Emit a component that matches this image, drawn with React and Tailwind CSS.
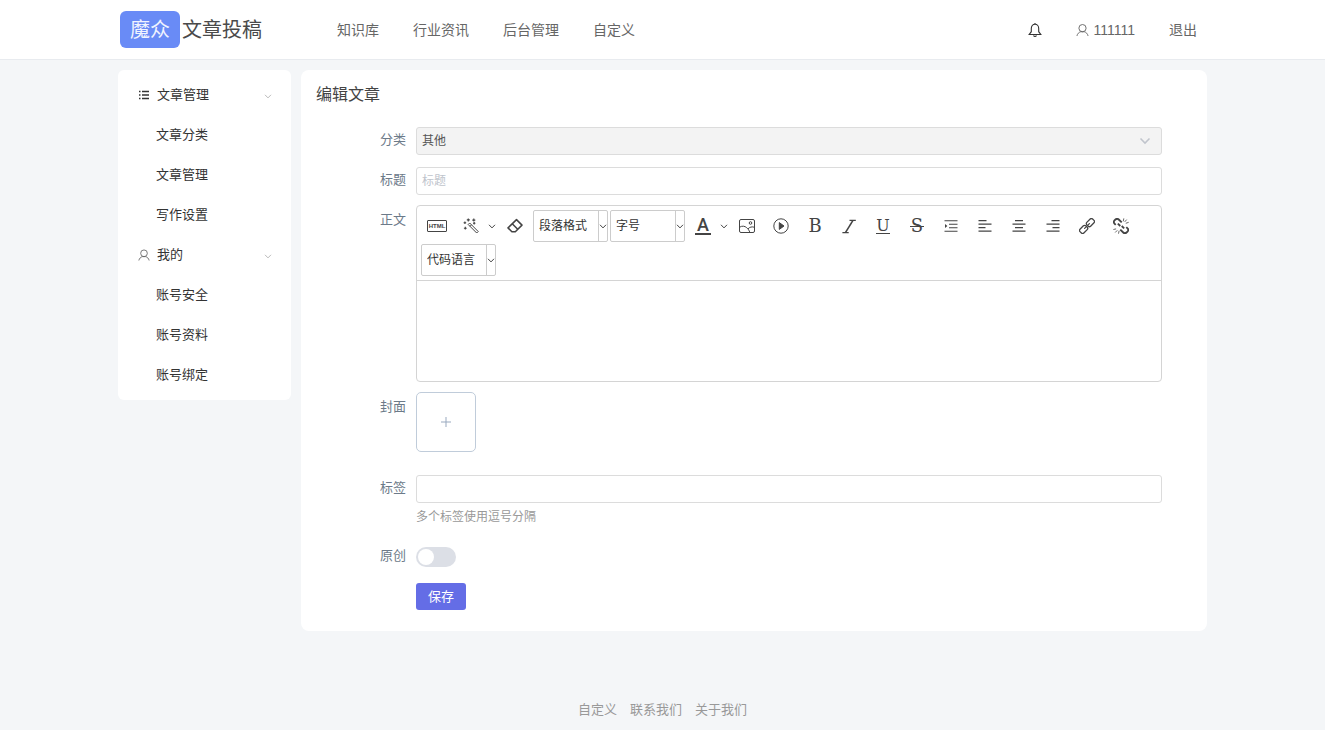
import { useState } from 'react';

const NAV_LINKS = ['知识库', '行业资讯', '后台管理', '自定义'];
const FOOTER_LINKS = ['自定义', '联系我们', '关于我们'];

const MENU = [
  { title: '文章管理', icon: 'list', items: ['文章分类', '文章管理', '写作设置'] },
  { title: '我的', icon: 'user', items: ['账号安全', '账号资料', '账号绑定'] },
];

const INPUT_CLASS =
  'block w-full h-7 px-[5px] border border-[#dcdcdc] rounded-[3px] text-xs text-[#555] placeholder-[#c0c4cc] bg-white outline-none focus:border-[#646de6]';

/* ---------- icons ---------- */

const UserIcon = ({ className }) => (
  <svg viewBox="0 0 14 14" className={className} fill="none" stroke="currentColor" strokeWidth="1">
    <circle cx="7" cy="5" r="3.9" />
    <path d="M1 13.4c.5-2.4 2.2-4 4-4.5h4c1.8.5 3.5 2.1 4 4.5" />
  </svg>
);

const BellIcon = ({ className }) => (
  <svg viewBox="0 0 14 16" className={className} fill="none" stroke="currentColor" strokeWidth="1.1">
    <path d="M7 2.3c-2.4 0-3.700 1.800-3.700 4.200v3.200L1.200 12.500h11.600l-2.100-2.800V6.500c0-2.400-1.300-4.200-3.700-4.200z" />
    <path d="M7 2.300V1M5.600 13.300c.2.900.7 1.200 1.400 1.200s1.200-.3 1.400-1.200" />
  </svg>
);

const ListIcon = ({ className }) => (
  <svg viewBox="0 0 10 10" className={className} fill="none" stroke="currentColor" strokeWidth="1.3">
    <path d="M0 1.500h1.500M3 1.500h7M0 5h1.500M3 5h7M0 8.500h1.500M3 8.500h7" />
  </svg>
);

const Chevron = ({ className }) => (
  <svg viewBox="0 0 8 5" className={className} fill="none" stroke="currentColor" strokeWidth="1">
    <path d="M1 .8 4 3.900 7 .8" />
  </svg>
);

const WandIcon = () => (
  <svg viewBox="0 0 16 16" className="w-4 h-4" fill="none" stroke="currentColor" strokeWidth="1">
    <path d="m5.200 6.500 1.500-1.500 8.500 8.500-1.500 1.500zM7 8.300l1.500-1.500" />
    <path
      d="M5.300.4v3M3.800 1.900h3M10.800.6v3M9.300 2.100h3M1.900 3.400v2.600M.6 4.700h2.600M2.300 8.800v2.800M.9 10.200h2.800M10 5.300h2.400M11.200 4.100v2.400"
      strokeWidth="1.1"
    />
  </svg>
);

const EraserIcon = () => (
  <svg viewBox="0 0 16 16" className="w-4 h-4" fill="none" stroke="currentColor" strokeWidth="1.5">
    <path d="M9.500 1.600 15 7.100 8.300 13.800H4.900L1 9.900z" strokeLinejoin="round" />
    <path d="m5.200 5.800 5.500 5.500" />
  </svg>
);

const PictureIcon = () => (
  <svg viewBox="0 0 16 16" className="w-4 h-4" fill="none" stroke="currentColor" strokeWidth="1">
    <rect x=".5" y="1.5" width="15" height="13" rx="1.5" />
    <circle cx="11.5" cy="5" r="1.3" />
    <path d="M.5 9.300c2.500-1.800 5.400-1.300 7.200.4 1.500 1.300 2.600 2.900 3.100 4.600M9 10.900c1.500-1.900 4.200-2.500 6.500-1.600" />
  </svg>
);

const PlayIcon = () => (
  <svg viewBox="0 0 16 16" className="w-4 h-4" fill="none" stroke="currentColor" strokeWidth="1">
    <circle cx="8" cy="8" r="7.2" />
    <path d="M6.300 4.600v6.800L11 8z" fill="currentColor" />
  </svg>
);

const ItalicIcon = () => (
  <svg viewBox="0 0 16 16" className="w-4 h-4" fill="none" stroke="currentColor" strokeWidth="1.2">
    <path d="M8.500 2.400h6.300M1.400 14.600h6.300" />
    <path d="M12 2.400 4.400 14.600" strokeWidth="1.6" />
  </svg>
);

const IndentIcon = () => (
  <svg viewBox="0 0 14 14" className="w-3.5 h-3.5" fill="none" stroke="currentColor" strokeWidth="1.1">
    <path d="M.5 1.700h13M5 5.200h8.500M5 8.700h8.500M.5 12.200h13" />
    <path d="M1 4.900v4.200L3.400 7z" fill="currentColor" stroke="none" />
  </svg>
);

const ALIGN_PATHS = {
  left: 'M.5 1.7h8M.5 5.2h13M.5 8.7h7M.5 12.2h13',
  center: 'M3 1.7h8M.5 5.2h13M3 8.7h8M.5 12.2h13',
  right: 'M5.5 1.7h8M.5 5.2h13M6.5 8.7h7M.5 12.2h13',
};

const AlignIcon = ({ align }) => (
  <svg viewBox="0 0 14 14" className="w-3.5 h-3.5" fill="none" stroke="currentColor" strokeWidth="1.2">
    <path d={ALIGN_PATHS[align]} />
  </svg>
);

const LinkIcon = () => (
  <svg viewBox="0 0 16 16" className="w-4 h-4" fill="none" stroke="currentColor" strokeWidth="1.3" strokeLinecap="round">
    <g transform="rotate(-45 8 8)">
      <path d="M7.300 7.200V7a1.700 1.700 0 0 0-1.700-1.700H.8A1.700 1.700 0 0 0-.9 7v2A1.700 1.700 0 0 0 .8 10.700h4.800A1.700 1.700 0 0 0 7.300 9" />
      <path d="M8.700 8.800V9a1.700 1.700 0 0 0 1.700 1.700h4.800A1.700 1.700 0 0 0 16.900 9V7a1.700 1.700 0 0 0-1.700-1.700h-4.800A1.700 1.700 0 0 0 8.700 7" />
      <path d="M4.600 8h6.800" />
    </g>
  </svg>
);

const UnlinkIcon = () => (
  <svg viewBox="0 0 16 16" className="w-4 h-4" fill="none" stroke="currentColor">
    <g transform="rotate(45 8 8)" strokeWidth="1.8">
      <path d="M6 5H1.800A2.300 2.300 0 0 0-.5 7.300v1.400A2.300 2.300 0 0 0 1.800 11h1.700M4 8.500h3.500" />
      <path d="M10 11h4.200a2.300 2.300 0 0 0 2.300-2.300V7.300A2.300 2.300 0 0 0 14.200 5h-1.700M12 7.500H8.500" />
    </g>
    <path
      d="M10.800.4 10.300 3.300M13.700 1.600 11.700 3.900M15.700 4.300l-2.900 1M.4 11.500l2.700-.6M2.200 14.500l2.100-2.200M5.500 15.700l.6-2.900"
      strokeWidth=".8"
    />
  </svg>
);

/* ---------- header ---------- */

const Header = () => (
  <header className="bg-white border-b border-[#e8ebef]">
    <div className="max-w-[1089px] mx-auto h-[59px] flex items-center px-0.5">
      <a href="#" className="flex items-center gap-0.5 text-xl text-[#4a4a4a]">
        <span className="h-[37px] px-2.5 flex items-center rounded-md bg-[#698bf6] text-[#f0f3ff]">
          魔众
        </span>
        <span>文章投稿</span>
      </a>
      <nav className="flex gap-[34px] ml-[75px] text-sm text-[#666]">
        {NAV_LINKS.map((link) => (
          <a key={link} href="#" className="hover:text-[#646de6]">
            {link}
          </a>
        ))}
      </nav>
      <div className="ml-auto mr-2 flex items-center gap-[34px] text-sm text-[#666]">
        <a href="#" aria-label="消息" className="text-[#333]">
          <BellIcon className="w-3.5 h-4" />
        </a>
        <a href="#" className="flex items-center gap-1">
          <UserIcon className="w-[13px] h-3.5" />
          111111
        </a>
        <a href="#">退出</a>
      </div>
    </div>
  </header>
);

/* ---------- sidebar ---------- */

const Sidebar = () => (
  <aside className="w-[173px] shrink-0 bg-white rounded-md py-[5px] text-[13px] text-[#333]">
    {MENU.map((group) => (
      <div key={group.title}>
        <button type="button" className="w-full h-10 pl-5 pr-[19px] flex items-center text-left">
          <span className="w-[19px] shrink-0">
            {group.icon === 'list' ? (
              <ListIcon className="w-2.5 h-2.5 ml-px" />
            ) : (
              <UserIcon className="w-3 h-3.5 text-[#666]" />
            )}
          </span>
          <span className="flex-1">{group.title}</span>
          <Chevron className="w-2 h-[5px] mt-0.5 text-[#bbb]" />
        </button>
        {group.items.map((item) => (
          <a key={item} href="#" className="flex h-10 items-center pl-[38px] hover:text-[#646de6]">
            {item}
          </a>
        ))}
      </div>
    ))}
  </aside>
);

/* ---------- editor ---------- */

const ToolButton = ({ label, children }) => (
  <button
    type="button"
    aria-label={label}
    className="w-8 h-8 flex items-center justify-center rounded-sm hover:bg-gray-100"
  >
    {children}
  </button>
);

const SplitButton = ({ label, children }) => (
  <div className="flex">
    <ToolButton label={label}>{children}</ToolButton>
    <button type="button" aria-label={`${label}选项`} className="w-2.5 h-8 flex items-center justify-center">
      <Chevron className="w-2 h-[5px] shrink-0" />
    </button>
  </div>
);

const ToolSelect = ({ label }) => (
  <div className="relative w-[75px] h-8">
    <select
      aria-label={label}
      className="w-full h-full appearance-none border border-[#ccc] rounded-xs bg-white pl-[5px] pr-2.5 text-xs text-[#333] outline-none"
    >
      <option>{label}</option>
    </select>
    <span className="absolute right-px inset-y-px w-[9px] flex items-center border-l border-[#ccc] pointer-events-none">
      <Chevron className="w-2 h-[5px] shrink-0" />
    </span>
  </div>
);

const Editor = () => (
  <div className="border border-[#d4d4d4] rounded-sm text-[#444]">
    <div className="flex flex-wrap items-center gap-0.5 p-1 border-b border-[#d4d4d4]">
      <ToolButton label="源代码">
        <span className="w-5 h-3 border border-current rounded-[1px] flex items-center justify-center text-[6px] leading-none font-bold">
          HTML
        </span>
      </ToolButton>
      <SplitButton label="自动排版">
        <WandIcon />
      </SplitButton>
      <ToolButton label="清除格式">
        <EraserIcon />
      </ToolButton>
      <ToolSelect label="段落格式" />
      <ToolSelect label="字号" />
      <SplitButton label="字体颜色">
        <span className="w-4 border-b-2 border-current font-[Roboto,sans-serif] text-lg leading-4 font-medium text-center">
          A
        </span>
      </SplitButton>
      <ToolButton label="图片">
        <PictureIcon />
      </ToolButton>
      <ToolButton label="视频">
        <PlayIcon />
      </ToolButton>
      <ToolButton label="加粗">
        <span className="font-['DejaVu_Serif',serif] text-lg leading-5">B</span>
      </ToolButton>
      <ToolButton label="斜体">
        <ItalicIcon />
      </ToolButton>
      <ToolButton label="下划线">
        <span className="w-3.5 border-b border-current font-['DejaVu_Serif',serif] text-base leading-3.5 text-center">
          U
        </span>
      </ToolButton>
      <ToolButton label="删除线">
        <span className="relative w-3.5 font-['DejaVu_Serif',serif] text-lg leading-5 text-center">
          S
          <span className="absolute inset-x-0 top-1/2 h-px bg-current" />
        </span>
      </ToolButton>
      <ToolButton label="首行缩进">
        <IndentIcon />
      </ToolButton>
      <ToolButton label="居左对齐">
        <AlignIcon align="left" />
      </ToolButton>
      <ToolButton label="居中对齐">
        <AlignIcon align="center" />
      </ToolButton>
      <ToolButton label="居右对齐">
        <AlignIcon align="right" />
      </ToolButton>
      <ToolButton label="超链接">
        <LinkIcon />
      </ToolButton>
      <ToolButton label="取消链接">
        <UnlinkIcon />
      </ToolButton>
      <ToolSelect label="代码语言" />
    </div>
    <textarea id="content" className="block w-full h-25 p-2 text-sm resize-none outline-none" />
  </div>
);

/* ---------- form ---------- */

const Field = ({ label, htmlFor, tall = false, children }) => (
  <div className="flex">
    <label
      htmlFor={htmlFor}
      className={`w-25 shrink-0 pr-2.5 text-right text-[13px] text-[#6c7a89] ${
        tall ? 'leading-[30px]' : 'leading-[26px]'
      }`}
    >
      {label}
    </label>
    <div className="flex-1 min-w-0">{children}</div>
  </div>
);

const ArticleForm = () => {
  const [title, setTitle] = useState('');
  const [tags, setTags] = useState('');
  const [original, setOriginal] = useState(false);

  return (
    <form className="pr-[30px]" onSubmit={(e) => e.preventDefault()}>
      <div className="flex flex-col gap-3">
        <Field label="分类" htmlFor="category">
          <div className="relative">
            <select
              id="category"
              className="block w-full h-7 px-[5px] appearance-none border border-[#dcdcdc] rounded-[3px] bg-[#f3f3f3] text-xs text-[#555] outline-none"
            >
              <option>其他</option>
            </select>
            <Chevron className="absolute right-[11px] top-2.5 w-3 h-2 text-[#c0c4cc] pointer-events-none" />
          </div>
        </Field>
        <Field label="标题" htmlFor="title">
          <input
            id="title"
            type="text"
            placeholder="标题"
            value={title}
            onChange={(e) => setTitle(e.target.value)}
            className={INPUT_CLASS}
          />
        </Field>
      </div>

      <div className="flex flex-col gap-2.5 mt-2.5">
        <Field label="正文" htmlFor="content" tall>
          <Editor />
        </Field>
        <Field label="封面" htmlFor="cover" tall>
          <button
            id="cover"
            type="button"
            className="w-15 h-15 flex items-center justify-center border border-[#c0ccda] rounded-[5px] text-[#99a9bf]"
          >
            <svg viewBox="0 0 10 10" className="w-2.5 h-2.5" stroke="currentColor">
              <path d="M5 0v10M0 5h10" />
            </svg>
          </button>
        </Field>
      </div>

      <div className="mt-[23px]">
        <Field label="标签" htmlFor="tags">
          <input
            id="tags"
            type="text"
            value={tags}
            onChange={(e) => setTags(e.target.value)}
            className={INPUT_CLASS}
          />
          <p className="mt-1 text-xs leading-5 text-[#999]">多个标签使用逗号分隔</p>
        </Field>
      </div>

      <div className="mt-4">
        <Field label="原创" htmlFor="original">
          <input
            id="original"
            type="checkbox"
            role="switch"
            checked={original}
            onChange={(e) => setOriginal(e.target.checked)}
            className="block mt-1 w-10 h-5 appearance-none rounded-full bg-[#dcdfe6] cursor-pointer before:block before:w-4 before:h-4 before:m-0.5 before:rounded-full before:bg-white checked:bg-[#646de6] checked:before:ml-5.5"
          />
        </Field>
      </div>

      <button
        type="submit"
        className="block ml-25 mt-3.5 h-[27px] px-3 rounded-[3px] bg-[#646de6] text-[13px] leading-[26px] text-white"
      >
        保存
      </button>
    </form>
  );
};

export default function App() {
  return (
    <div className="min-h-screen flex flex-col bg-[#f4f6f8] font-['Liberation_Sans','Noto_Sans_CJK_SC',sans-serif]">
      <Header />
      <div className="w-full max-w-[1089px] mx-auto mt-2.5 flex items-start gap-2.5">
        <Sidebar />
        <main className="flex-1 min-w-0 bg-white rounded-lg px-[15px] pt-[13px] pb-[21px]">
          <h1 className="mb-5 text-base text-[#444]">编辑文章</h1>
          <ArticleForm />
        </main>
      </div>
      <footer className="mt-auto pt-10 pb-2.5 flex justify-center gap-[13px] text-[13px] leading-5 text-[#999]">
        {FOOTER_LINKS.map((link) => (
          <a key={link} href="#">
            {link}
          </a>
        ))}
      </footer>
    </div>
  );
}
